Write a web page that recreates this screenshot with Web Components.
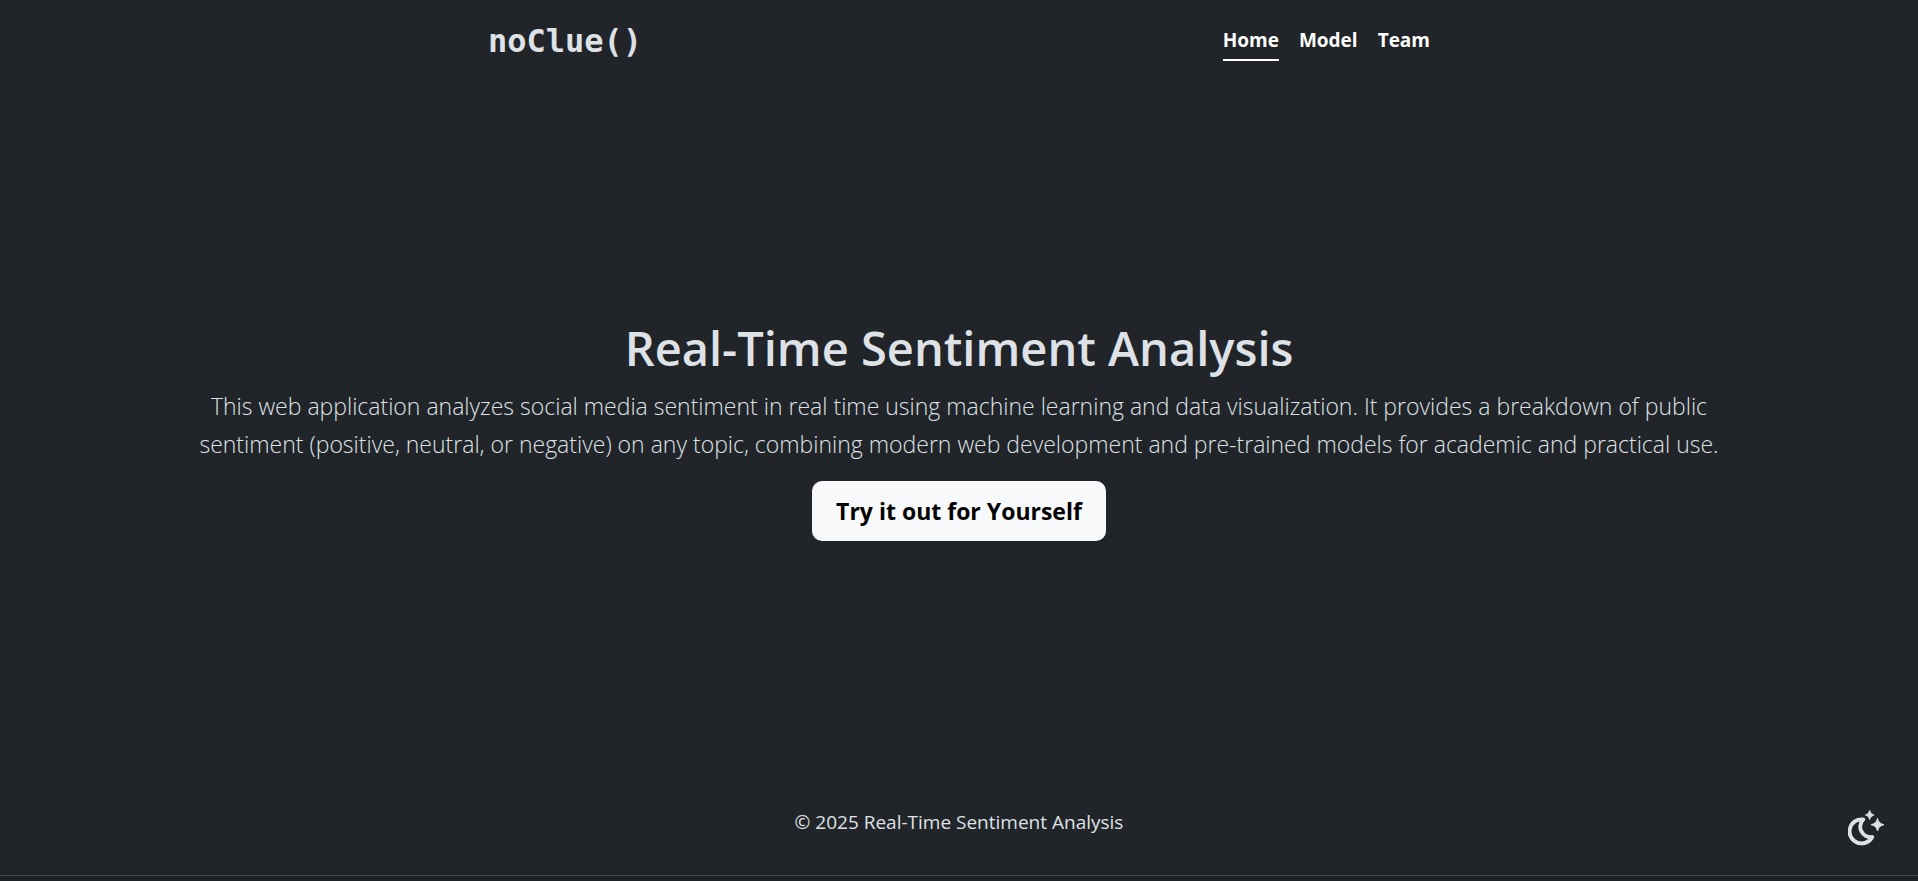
<!DOCTYPE html>
<html lang="en">
<head>
<meta charset="utf-8">
<meta name="viewport" content="width=device-width, initial-scale=1">
<title>noClue()</title>
<style>
  html { background: #212529; }
  body {
    margin: 0;
    color: #dee2e6;
    font-family: "Open Sans", "Noto Sans", sans-serif;
    font-size: 19px;
    line-height: 30px;
  }
</style>
</head>
<body>
<app-shell>
  <site-header slot="header" brand="noClue()">
    <nav-item href="#home" current>Home</nav-item>
    <nav-item href="#model">Model</nav-item>
    <nav-item href="#team">Team</nav-item>
  </site-header>
  <hero-section>
    <span slot="title">Real-Time Sentiment Analysis</span>
    This web application analyzes social media sentiment in real time using machine learning and data visualization. It provides a breakdown of public sentiment (positive, neutral, or negative) on any topic, combining modern web development and pre-trained models for academic and practical use.
    <action-button slot="action">Try it out for Yourself</action-button>
  </hero-section>
  <site-footer slot="footer">© 2025 Real-Time Sentiment Analysis</site-footer>
</app-shell>
<theme-toggle></theme-toggle>

<script>
const define = (name, markup, setup) => {
  const template = document.createElement("template");
  template.innerHTML = markup;
  customElements.define(name, class extends HTMLElement {
    constructor() {
      super();
      this.attachShadow({ mode: "open" }).append(template.content.cloneNode(true));
    }
    connectedCallback() {
      if (setup) setup(this, this.shadowRoot);
    }
  });
};

define("app-shell", `
  <style>
    :host { display: flex; flex-direction: column; box-sizing: border-box; min-height: 100vh; padding-bottom: 5px; background: #1e2125; }
    .page { flex: 1; display: flex; flex-direction: column; border-bottom: 1px solid #43474b; background: #212529; }
    main { flex: 1; display: grid; align-items: center; }
  </style>
  <div class="page">
    <slot name="header"></slot>
    <main><slot></slot></main>
    <slot name="footer"></slot>
  </div>`);

define("site-header", `
  <style>
    :host { display: block; padding: 20px 16px; }
    header { display: flex; flex-wrap: wrap; justify-content: space-between; align-items: center; max-width: 942px; margin: 0 auto; }
    .brand { color: inherit; text-decoration: none; font: bold 32px/42px "DejaVu Sans Mono", monospace; }
    nav { display: flex; gap: 20px; }
  </style>
  <header>
    <a class="brand" href="#home"></a>
    <nav aria-label="Main"><slot></slot></nav>
  </header>`, (host, root) => {
  root.querySelector(".brand").textContent = host.getAttribute("brand");
});

define("nav-item", `
  <style>
    :host { display: block; }
    a { display: block; padding: 4px 0; border-bottom: 2px solid transparent; color: #fff; font-weight: 700; text-decoration: none; }
    :host([current]) a { border-color: #fff; }
  </style>
  <a><slot></slot></a>`, (host, root) => {
  const link = root.querySelector("a");
  link.href = host.getAttribute("href");
  if (host.hasAttribute("current")) link.setAttribute("aria-current", "page");
});

define("hero-section", `
  <style>
    :host { display: block; padding: 0 170px 30px; text-align: center; }
    h1 { margin: 0 0 9px; font-size: 47px; line-height: 60px; font-weight: 600; }
    p { margin: 0 0 18px; font-size: 23px; line-height: 38px; font-weight: 300; }
    @media (max-width: 1000px) { :host { padding: 0 24px 30px; } }
  </style>
  <section>
    <h1><slot name="title"></slot></h1>
    <p><slot></slot></p>
    <slot name="action"></slot>
  </section>`);

define("action-button", `
  <style>
    :host { display: inline-block; vertical-align: top; }
    button { display: block; padding: 11px 24px; border: 0; border-radius: 10px; background: #f8f9fa; color: #000; font: 700 23px/38px "Open Sans", "Noto Sans", sans-serif; cursor: pointer; }
  </style>
  <button type="button"><slot></slot></button>`);

define("site-footer", `
  <style>
    :host { display: block; padding: 0 16px 38px; text-align: center; }
    footer { display: block; }
  </style>
  <footer><slot></slot></footer>`);

define("theme-toggle", `
  <style>
    :host { position: fixed; right: 32px; bottom: 34px; color: #dee2e6; }
    button { display: block; padding: 0; border: 0; background: none; color: inherit; cursor: pointer; }
    svg { display: block; }
  </style>
  <button type="button" aria-label="Toggle theme">
    <svg width="38" height="38" viewBox="0 0 38 38" aria-hidden="true">
      <path d="M15.200 10.500A12 12 0 1 0 24.200 28A10.400 10.400 0 0 1 15.200 10.500Z" fill="none" stroke="currentColor" stroke-width="3.900" stroke-linejoin="round"/>
      <path d="M21.700 1.500Q22.300 5.200 26 6Q22.300 6.700 21.700 10.500Q21 6.700 17.500 6Q21 5.200 21.700 1.500Z M29.500 9.300Q30.500 14.700 36 15.700Q30.500 16.700 29.500 22Q28.500 16.700 23 15.700Q28.500 14.700 29.500 9.300Z" fill="currentColor" stroke="currentColor" stroke-width="1" stroke-linejoin="round"/>
    </svg>
  </button>`);
</script>
</body>
</html>
